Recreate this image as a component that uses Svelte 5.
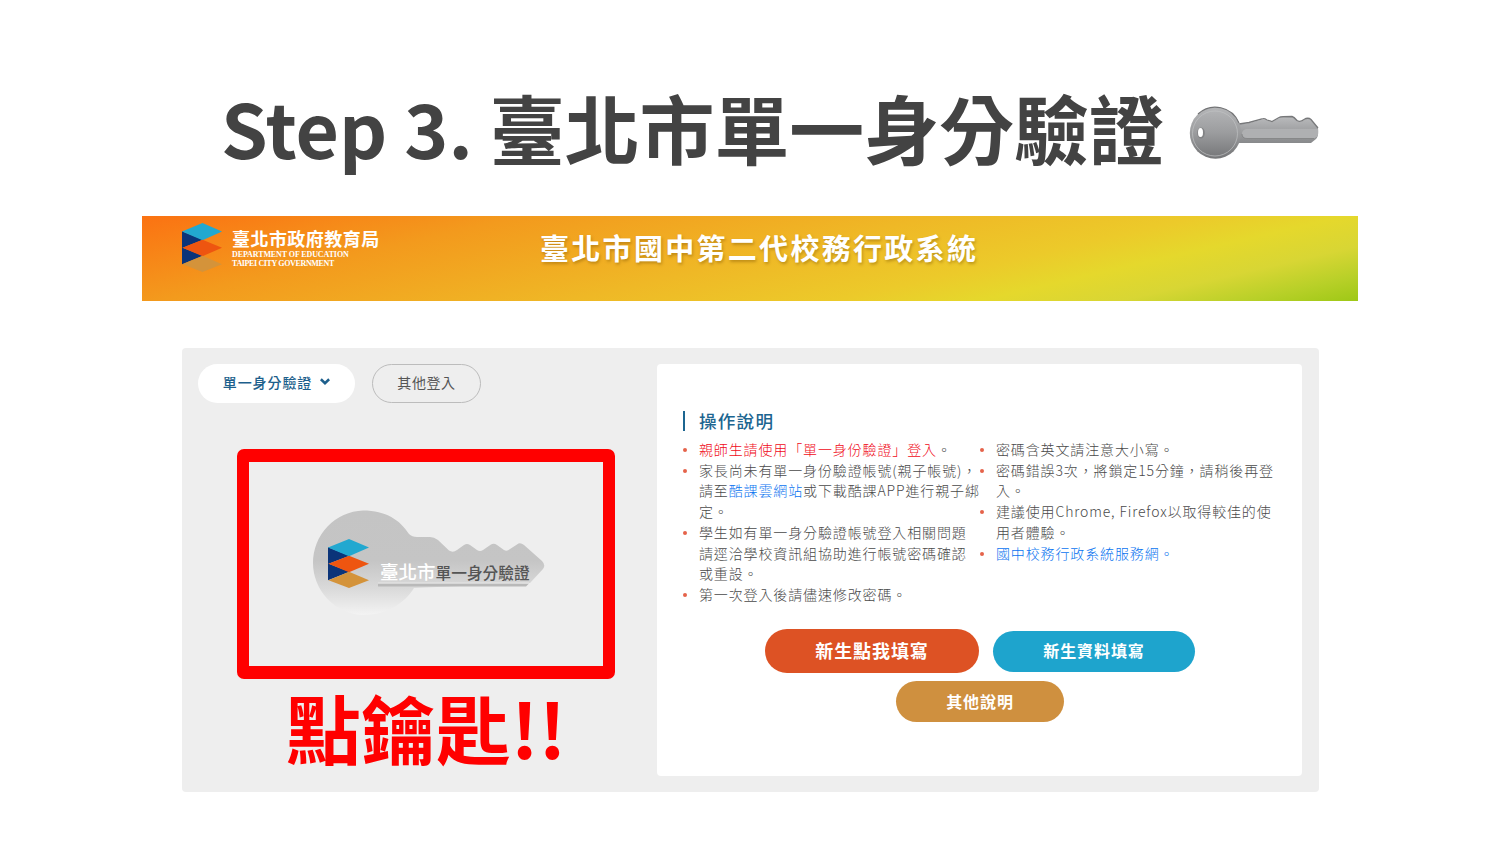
<script lang="ts">
  interface Part {
    text: string;
    tone?: 'alert' | 'link';
  }

  // Each note is a list of lines, each line a list of coloured parts.
  const notesLeft: Part[][][] = [
    [[{ text: '親師生請使用「單一身份驗證」登入', tone: 'alert' }, { text: '。' }]],
    [
      [{ text: '家長尚未有單一身份驗證帳號(親子帳號)，' }],
      [{ text: '請至' }, { text: '酷課雲網站', tone: 'link' }, { text: '或下載酷課APP進行親子綁' }],
      [{ text: '定。' }],
    ],
    [
      [{ text: '學生如有單一身分驗證帳號登入相關問題' }],
      [{ text: '請逕洽學校資訊組協助進行帳號密碼確認' }],
      [{ text: '或重設。' }],
    ],
    [[{ text: '第一次登入後請儘速修改密碼。' }]],
  ];
  const notesRight: Part[][][] = [
    [[{ text: '密碼含英文請注意大小寫。' }]],
    [[{ text: '密碼錯誤3次，將鎖定15分鐘，請稍後再登' }], [{ text: '入。' }]],
    [[{ text: '建議使用Chrome, Firefox以取得較佳的使' }], [{ text: '用者體驗。' }]],
    [[{ text: '國中校務行政系統服務網。', tone: 'link' }]],
  ];
  const columns = [notesLeft, notesRight];
</script>

{#snippet emblem(cls)}
  <svg class={cls} viewBox="0 0 40 48" preserveAspectRatio="none" aria-hidden="true">
    <path d="M0 8 L21 16.5 L0 24.5 Z" fill="#0b3479" />
    <path d="M0 24 L21 32 L0 40.5 Z" fill="#0b3479" />
    <path d="M20.5 0 L40 8.3 L20.5 16.8 L0 8.3 Z" fill="#22a8d0" />
    <path d="M20.5 16.5 L40 24.3 L20.5 32.5 L0.5 24.3 Z" fill="#ee5510" />
    <path d="M20.5 32.2 L40 40.3 L20.5 48 L0.5 40.3 Z" fill="#d4933a" />
  </svg>
{/snippet}

<main class="slide">
  <h1 class="headline">
    <span>Step 3. 臺北市單一身分驗證</span>
    <svg class="headline__key" viewBox="0 0 130 54" aria-hidden="true">
      <defs>
        <linearGradient id="steel" x1="0" y1="0" x2="0" y2="1">
          <stop offset="0" stop-color="#b5b6b8" />
          <stop offset="0.5" stop-color="#9b9c9e" />
          <stop offset="1" stop-color="#747577" />
        </linearGradient>
        <linearGradient id="blade" x1="0" y1="0" x2="0" y2="1">
          <stop offset="0" stop-color="#b9babc" />
          <stop offset="1" stop-color="#88898b" />
        </linearGradient>
      </defs>
      <path
        d="M44 19 L60 17 L73 13.5 Q75 12.5 78 14.5 L83 16 L90 12 Q92 11 103 11 Q105 11 108 15 Q111 17 115 14 Q119 11 122 14 L129 22 Q130 30 127 33 L122 37 L44 37 Z"
        fill="url(#blade)"
      />
      <path
        d="M50 18 L60 16.5 L73 13 Q75 12 78 14 L83 15.5 L90 11.5 Q92 10.5 103 10.5 Q105 11 108 14.5 Q111 16.5 115 13.5 Q119 11 122 13.5 L129 22"
        fill="none"
        stroke="#77787a"
        stroke-width="1.3"
      />
      <circle cx="26.5" cy="27" r="25.7" fill="url(#steel)" />
      <path d="M9 8 A25.5 25.5 0 0 1 50 17" fill="none" stroke="#727375" stroke-width="1.2" />
      <circle cx="26" cy="27.5" r="22.5" fill="none" stroke="#c0c1c3" stroke-width="0.7" />
      <path d="M57 23 H129 V29 Q128 32 125 32.5 H57 Q53 31 53 27.5 Q53 24 57 23 Z" fill="#afb0b2" />
      <path d="M53 28 Q53 32.5 58 32.5 H125" fill="none" stroke="#808183" stroke-width="0.8" />
      <ellipse cx="12" cy="27" rx="3.8" ry="5.5" fill="#818284" />
      <ellipse cx="11.5" cy="26.5" rx="2.5" ry="4.5" fill="#fff" />
    </svg>
  </h1>

  <header class="banner">
    <div class="brand">
      {@render emblem('brand__logo')}
      <div class="brand__text">
        <div class="brand__name">臺北市政府教育局</div>
        <div class="brand__en">DEPARTMENT OF EDUCATION</div>
        <div class="brand__en brand__en--city">TAIPEI CITY GOVERNMENT</div>
      </div>
    </div>
    <div class="banner__title">臺北市國中第二代校務行政系統</div>
  </header>

  <section class="panel">
    <div class="login">
      <div class="tabs">
        <button type="button" class="tab tab--active">
          單一身分驗證
          <svg class="tab__caret" viewBox="0 0 8 6" aria-hidden="true">
            <path d="M0.7 1 L4 4.2 L7.3 1" fill="none" stroke="currentColor" stroke-width="2" />
          </svg>
        </button>
        <button type="button" class="tab">其他登入</button>
      </div>

      <div class="highlight">
        <div class="sso">
          <svg class="sso__key" viewBox="0 0 236 106" aria-hidden="true">
            <defs>
              <linearGradient id="fade" x1="0" y1="0" x2="0" y2="1">
                <stop offset="0" stop-color="#c4c4c4" />
                <stop offset="0.48" stop-color="#c5c5c5" />
                <stop offset="0.75" stop-color="#dadada" />
                <stop offset="1" stop-color="#f3f3f3" />
              </linearGradient>
            </defs>
            <path
              d="M53 0.5 C76 0.5 90 10 99 24 Q102 27 107 27 L120 27 Q124 27 128 30 L139 40.5 Q143 43 147 40 L154 35 Q157 33 160 35 L167 40 Q170 42 173 40 L181 34.5 Q184 33 187 35 L194 40 Q197 42 200 39 L207 34.5 Q210 32 214 35 L232 51 Q236 55 233 59 L220 73 L104 78 C94 94 76 105 53 105 A52.3 52.3 0 0 1 53 0.5 Z"
              fill="url(#fade)"
            />
            <path d="M68 73.5 H219 L216 76.5 H68 Z" fill="#b9b9b9" />
            <path d="M68 73 H219" stroke="#e6e6e6" stroke-width="1" />
          </svg>
          {@render emblem('sso__logo')}
          <div class="sso__label"><b>臺北市</b><span>單一身分驗證</span></div>
        </div>
      </div>
      <p class="callout">點鑰匙!!</p>
    </div>

    <div class="guide">
      <h2 class="guide__title">操作說明</h2>
      <div class="guide__cols">
        {#each columns as notes}
          <ul class="notes">
            {#each notes as note}
              <li>
                {#each note as line}
                  <div>{#each line as part}<span class={part.tone}>{part.text}</span>{/each}</div>
                {/each}
              </li>
            {/each}
          </ul>
        {/each}
      </div>
      <div class="actions">
        <button type="button" class="action action--new">新生點我填寫</button>
        <button type="button" class="action action--data">新生資料填寫</button>
        <button type="button" class="action action--more">其他說明</button>
      </div>
    </div>
  </section>
</main>

<style>
  :global(body) {
    background: #fff;
  }

  .slide {
    box-sizing: border-box;
    width: 1500px;
    height: 844px;
    overflow: hidden;
    font-family: 'Noto Sans CJK TC', 'Noto Sans', sans-serif;
    white-space: nowrap;
  }

  button {
    box-sizing: border-box;
    padding: 0;
    border: 0;
    font-family: inherit;
    cursor: pointer;
  }

  .headline {
    display: flex;
    box-sizing: border-box;
    height: 216px;
    margin: 0;
    padding: 73px 0 0 221px;
    font-size: 74.9px;
    line-height: 108px;
    font-weight: 700;
    color: #434343;
  }

  .headline__key {
    width: 130px;
    height: 54px;
    margin: 33px 0 0 25px;
  }

  .banner {
    display: flex;
    width: 1216px;
    height: 85px;
    margin: 0 auto;
    color: #fff;
    background: linear-gradient(
      167deg,
      #fb7212 0%,
      #f39a1d 24%,
      #efb826 50%,
      #ecca2a 67%,
      #e5d82c 76%,
      #d8d634 85%,
      #b8d028 93%,
      #9ec816 100%
    );
  }

  .brand {
    display: flex;
    box-sizing: border-box;
    width: 398px;
    padding: 7px 0 0 40px;
  }

  .brand__logo {
    width: 40px;
    height: 49px;
  }

  .brand__text {
    margin-left: 10px;
    padding-top: 3px;
  }

  .brand__name {
    font-size: 18px;
    line-height: 25px;
    letter-spacing: 0.45px;
    font-weight: 700;
  }

  .brand__en {
    font-family: 'Liberation Serif', serif;
    font-size: 8px;
    line-height: 8.5px;
    font-weight: 700;
    letter-spacing: -0.1px;
  }

  .brand__en--city {
    letter-spacing: -0.36px;
  }

  .banner__title {
    padding-top: 10px;
    font-size: 29px;
    line-height: 42px;
    letter-spacing: 2.3px;
    font-weight: 700;
    text-shadow: 1px 2px 3px rgba(120, 80, 0, 0.4);
  }

  .panel {
    display: flex;
    justify-content: space-between;
    box-sizing: border-box;
    width: 1137px;
    height: 444px;
    margin: 47px 0 0 182px;
    padding: 16px 17px 16px 16px;
    border-radius: 4px;
    background: #eee;
  }

  .tabs {
    display: flex;
    gap: 17px;
  }

  .tab {
    width: 109px;
    height: 39px;
    padding-bottom: 3px;
    border: 1px solid #bcbcbc;
    border-radius: 20px;
    background: transparent;
    color: #555;
    font-size: 14px;
    letter-spacing: 0.6px;
  }

  .tab--active {
    display: flex;
    align-items: center;
    justify-content: center;
    gap: 8px;
    width: 157px;
    border: 0;
    background: #fff;
    color: #1d5f8c;
    font-weight: 500;
    letter-spacing: 0.9px;
  }

  .tab__caret {
    width: 10px;
    height: 7.5px;
  }

  .highlight {
    box-sizing: border-box;
    width: 378px;
    height: 230px;
    margin: 46px 0 0 39px;
    padding: 48px 0 0 61px;
    border: solid #f00;
    border-width: 13px 12px;
    border-radius: 7px;
  }

  .sso {
    position: relative;
    width: 236px;
    height: 106px;
  }

  .sso__key {
    display: block;
    width: 236px;
    height: 106px;
  }

  .sso__logo {
    position: absolute;
    left: 18px;
    top: 29px;
    width: 41px;
    height: 49px;
  }

  .sso__label {
    position: absolute;
    left: 70px;
    top: 49px;
    font-size: 15.7px;
    line-height: 24px;
    color: #555;
    font-weight: 500;
  }

  .sso__label b {
    font-size: 18.5px;
    font-weight: 500;
    color: #fff;
  }

  .callout {
    margin: -6px 0 0 88px;
    font-size: 74.9px;
    line-height: 108px;
    font-weight: 700;
    color: #f00;
  }

  .guide {
    box-sizing: border-box;
    width: 645px;
    height: 412px;
    padding: 47px 0 0 26px;
    border-radius: 4px;
    background: #fff;
  }

  .guide__title {
    margin: 0;
    padding-left: 14px;
    border-left: 2px solid #1c6590;
    font-size: 17.6px;
    line-height: 20px;
    letter-spacing: 1.2px;
    font-weight: 500;
    color: #1c6590;
  }

  .guide__cols {
    display: flex;
    height: 176px;
    margin-top: 8px;
  }

  .notes {
    width: 297px;
    margin: 0;
    padding: 0;
    list-style: none;
    font-size: 14px;
    line-height: 20.7px;
    letter-spacing: 0.87px;
    font-weight: 300;
    color: #4a4a4a;
  }

  .notes li {
    position: relative;
    padding-left: 16px;
  }

  .notes li::before {
    content: '';
    position: absolute;
    left: 0;
    top: 9px;
    width: 4px;
    height: 4px;
    border-radius: 50%;
    background: #e5634a;
  }

  .alert {
    color: #f00a18;
  }

  .link {
    color: #0a74f0;
  }

  .actions {
    display: grid;
    grid-template-columns: 214px 202px;
    column-gap: 14px;
    row-gap: 8px;
    align-items: center;
    margin: 14px 0 0 82px;
  }

  .action {
    height: 41px;
    padding-bottom: 2px;
    border-radius: 22px;
    color: #fff;
    font-weight: 700;
    font-size: 16px;
    letter-spacing: 0.9px;
  }

  .action--new {
    height: 44px;
    background: #dd5224;
    font-size: 18px;
  }

  .action--data {
    background: #1ea4cd;
  }

  .action--more {
    grid-column: 1 / -1;
    justify-self: center;
    width: 168px;
    background: #cf903f;
  }
</style>
